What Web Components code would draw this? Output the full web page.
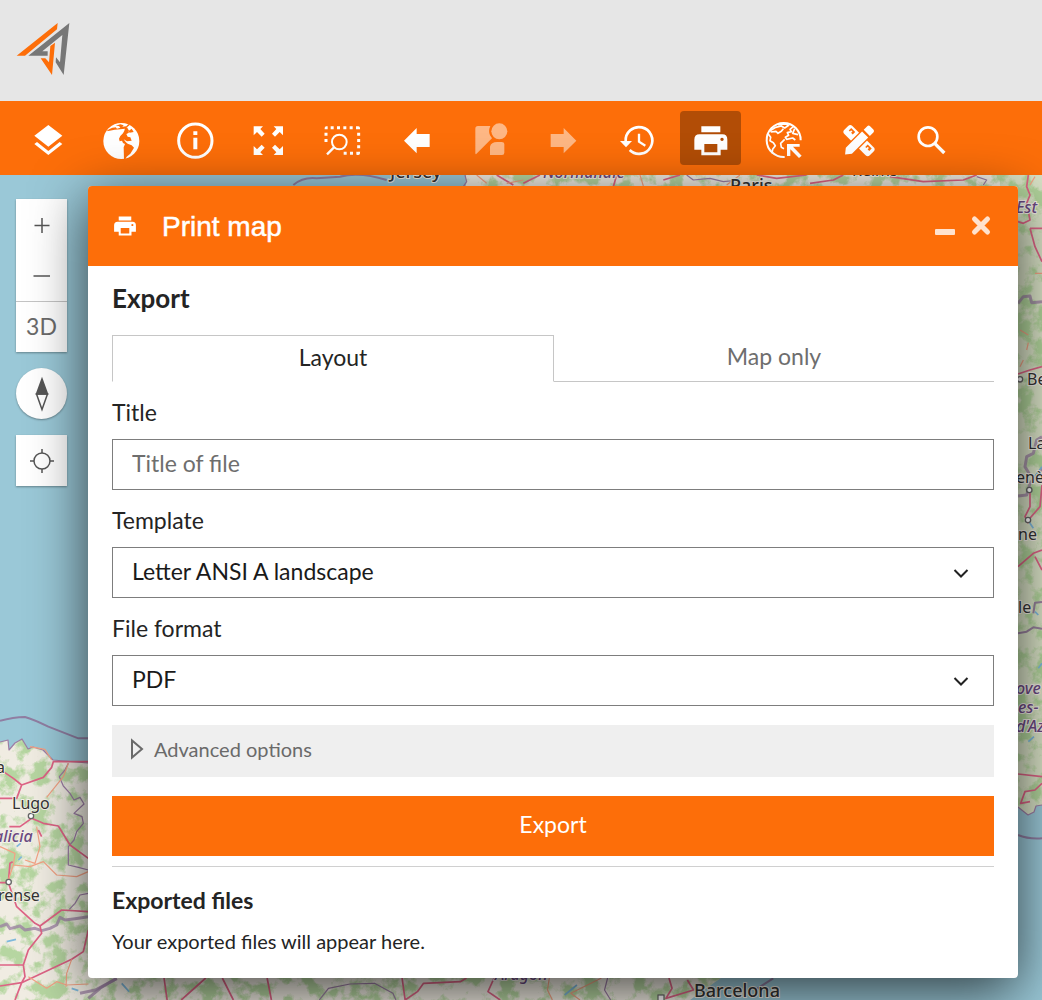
<!DOCTYPE html>
<html lang="en">
<head>
<meta charset="utf-8">
<title>Print map</title>
<style>
  body { margin: 0; font-family: Lato, "Open Sans", sans-serif; color: #242424; background: #9ac8d7; }
  map-app { --brand: #fd6e09; }
</style>
</head>
<body>
<map-app></map-app>

<script>
class BaseElement extends HTMLElement {
  connectedCallback() {
    if (this.shadowRoot) return;
    this.attachShadow({ mode: "open" });
    const t = document.createElement("template");
    t.innerHTML = `<style>*{box-sizing:border-box}button,input,select{font:inherit;color:inherit;margin:0}${this.css()}</style>${this.html()}`;
    this.shadowRoot.append(t.content.cloneNode(true));
  }
  css() { return ""; }
  html() { return "<slot></slot>"; }
}

/* Each icon: [viewBox, markup] */
const printer = `<path fill-rule="evenodd" d="M123 79h57v18h-57zM118 103H186Q201 103 201 119V149H181V166H123V149H102V119Q102 103 118 103zM132 132V157H171V132zM185 113a5 5 0 1 0 .1 0z"/>`;
const ICONS = {
  layers: ["80 51 126 126", `<path d="M144 75l42 32-42 33-42-33zM102 132l8-6 34 27 34-27 8 6-42 33z"/>`],
  globe: ["301 51 126 126", `<circle cx="365" cy="123" r="54"/><g fill="var(--brand)"><path d="M328 88L345 80L338 84L348 82L352 86L362 83L358 78L348 77L362 73L372 76L368 80L380 79L386 72L390 75L382 82L376 86L362 88L345 89L330 92L320 94z"/><path d="M376 84L374 92L370 100L362 108L358 116L360 124L367 122L370 129L376 132L372 142L373 178H377L381 170L392 161L403 143L396 136L384 131L378 126L372 118L382 124L396 122L392 112L384 110L380 102L388 98L384 92L390 98L402 96L396 86L388 92L382 82z"/></g>`],
  info: ["521 51 126 126", `<circle cx="585" cy="122" r="50" fill="none" stroke="#fff" stroke-width="9"/><path d="M579 94h12v11h-12zM579 113h12v35h-12z"/>`],
  expand: ["742 51 126 126", `<path d="M762 79h28l-8 8 13 14-9 9-14-14-10 10zM850 79h-28l8 8-13 14 9 9 14-14 10 10zM762 165h28l-8-8 13-14-9-9-14 14-10-10zM850 165h-28l8-8-13-14 9-9 14 14 10-10z"/>`],
  zoomarea: ["34 51 126 126", `<g fill="none" stroke="#fff"><path stroke-width="9" stroke-dasharray="9 10" d="M63 83H142M147 98V156M49 98V130M102 160H142"/><circle cx="89" cy="126" r="22" stroke-width="6"/><path stroke-width="7" d="M73 142L52 163"/></g><path d="M45 88v-4q0-5 5-5h4v9zM142 79h4q5 0 5 5v4h-9zM142 165h4q5 0 5-5v-4h-9z"/>`],
  back: ["253 51 126 126", `<path d="M280 122L318 84V102H357V141H318V160z"/>`],
  street: ["474 51 126 126", `<circle cx="568" cy="94" r="24"/><path d="M504 78H541Q534 94 540 106L546 115L498 163Q496 163 496 159V86Q496 78 504 78zM540 165V140Q543 126 562 126H575Q583 126 583 132V158Q583 165 576 165z"/>`],
  forward: ["695 51 126 126", `<path d="M798 122L760 84V102H721V141H760V160z"/>`],
  history: ["916 51 126 126", `<g fill="none" stroke="#fff"><path stroke-width="8" d="M945 124A40 40 0 1 1 957 150"/><path stroke-width="7" d="M985 101V125L1004 137"/></g><path d="M928 123H964L946 142z"/>`],
  print: ["86 51 126 126", printer],
  minprint: ["97 70 109 105", printer],
  globecursor: ["307 51 126 126", `<g fill="none" stroke="#fff" stroke-width="6"><path d="M420 121A51 51 0 1 0 372 171"/><path stroke-width="5" stroke-linejoin="round" d="M321 100L330 112L328 122L338 128L344 137L336 148L334 160M327 93L345 82L362 78L372 84L384 76L374 72L352 74M330 96L346 94L352 100L362 94L368 86M398 80L388 88L392 95L380 98L384 106L374 112L378 118L396 114L404 120M372 118L360 130L362 142L370 146M402 86L396 100L412 104"/></g><path d="M379 132H417V140H397L423 167L415 174L389 148V168H379z"/>`],
  design: ["527 51 126 126", `<g transform="rotate(45 593 122)"><rect x="539" y="105" width="108" height="34" rx="9"/><path fill="none" stroke="var(--brand)" stroke-width="5" d="M552 122V114H564V122M562 114V122M622 122V114H634V122M632 114V122"/></g><g transform="rotate(-45 593 122)"><path fill="var(--brand)" d="M564 105H622V139H564z"/><path d="M534 122L550 109H619V135H550zM626 109H641Q647 109 647 115V129Q647 135 641 135H626z"/></g>`],
  search: ["748 51 126 126", `<g fill="none" stroke="#fff"><circle cx="802" cy="110" r="28" stroke-width="8"/><path stroke-width="10" d="M822 130L851 159"/></g>`]
};
class MapIcon extends BaseElement {
  css() { return `:host{display:block;width:42px;height:42px}svg{display:block;width:100%;height:100%}`; }
  html() {
    const [vb, body] = ICONS[this.getAttribute("name")];
    return `<svg viewBox="${vb}" fill="#fff" aria-hidden="true">${body}</svg>`;
  }
}

class BrandHeader extends BaseElement {
  css() { return `:host{display:block;background:#e6e6e6;height:101px}a{display:inline-block}svg{display:block;width:100px;height:100px}`; }
  html() {
    return `<a href="#" aria-label="Home"><svg viewBox="0 0 300 300"><path fill="#fd6e09" d="M50 167L173 69L171 88L75 167zM122 175H136L147 187L151 138L165 128L156 225z"/><path fill="#777" d="M85 167L208 69L191 225L167 187L168 172L180 187L187 105L127 154H143V167z"/></svg></a>`;
  }
}

class ToolButton extends BaseElement {
  css() {
    return `:host{display:block}
    button{display:flex;align-items:center;justify-content:center;width:61px;height:54px;padding:0;border:0;border-radius:4px;background:none}
    :host([active]) button{background:#b24d06}
    button:disabled map-icon{opacity:.5}`;
  }
  html() {
    return `<button aria-label="${this.getAttribute("label")}" ${this.hasAttribute("disabled") ? "disabled" : ""}><map-icon name="${this.getAttribute("icon")}"></map-icon></button>`;
  }
}

class MapToolbar extends BaseElement {
  css() { return `:host{display:block;background:var(--brand);padding:10px 17px}nav{display:flex;justify-content:space-between;max-width:945px}`; }
  html() {
    const tools = [["layers","Layers"],["globe","Base maps"],["info","Information"],["expand","Full extent"],["zoomarea","Zoom to area"],["back","Previous view"],["street","Street view","disabled"],["forward","Next view","disabled"],["history","History"],["print","Print map","active"],["globecursor","Coordinates"],["design","Draw and measure"],["search","Search"]];
    return `<nav aria-label="Map tools">${tools.map(([i,l,s=""]) => `<tool-button icon="${i}" label="${l}" ${s}></tool-button>`).join("")}</nav>`;
  }
}

class BaseMap extends BaseElement {
  css() {
    return `:host{display:block}svg{display:block;width:100%;height:100%}
    path{fill:none;vector-effect:non-scaling-stroke;stroke-linejoin:round}
    .land{fill:#f0ece2}.sea{fill:#9ac8d7}.hills{fill:#c9dcb4;opacity:.6}
    .coast{stroke:#9c7da5;stroke-width:1.2}.border{stroke:#8f7299;stroke-width:2;opacity:.85}.thick{stroke:#9b7fa3;stroke-width:3;opacity:.75}
    .road{stroke:#dd6385;stroke-width:1.7}.minor{stroke:#f3a285;stroke-width:1.2}.river{stroke:#7fb9dc;stroke-width:1.7}
    .town{fill:#fff;stroke:#666;stroke-width:1.2}
    circle.town{stroke-width:4}
    text{font-family:"Noto Sans",sans-serif;font-size:16px;fill:#333;stroke:#f4f0e8;stroke-width:2px;paint-order:stroke}
    .region{font-style:italic;fill:#6b4a82}.city,.region{font-weight:500}.city{font-size:18px}`;
  }
  html() {
    return `<svg viewBox="0 175 1042 825" preserveAspectRatio="xMinYMin slice" role="img" aria-label="Map of western Europe">
    <defs>
      <filter id="veg" x="0" y="0" width="100%" height="100%" color-interpolation-filters="sRGB"><feTurbulence type="fractalNoise" baseFrequency=".06" numOctaves="5" seed="4"/><feColorMatrix values="0 0 0 0 .66  0 0 0 0 .82  0 0 0 0 .57  6 0 0 0 -2.8"/></filter>
      <clipPath id="land"><path d="M0 742L8 740L9 750L15 743L22 739L28 749L33 747L43 750L53 760L88 763H460L466 175H1042V805L1036 806L1034 812L1028 815L1018 807L760 950L690 1000H0z"/></clipPath>
    </defs>
    <path class="sea" d="M0 175H1042V1000H0z"/>
    <g clip-path="url(#land)"><path class="land" d="M0 175H1042V1000H0z"/><path class="hills" d="M1000 175H1042V1000H1000z"/><rect x="0" y="175" width="1042" height="825" filter="url(#veg)" opacity=".8"/></g>
    <path class="coast" d="M0 742L8 740L9 750L15 743L22 739L28 749L33 747L43 750L53 760L88 763M1018 807L1028 815L1034 812L1036 806L1042 805"/>
    <g transform="translate(0 680) scale(.33333)">
      <path class="border" d="M0 122Q40 112 75 111Q100 118 145 140L235 175H265"/>
      <path class="coast" d="M205 250L195 270L178 290L190 318L210 340L222 360L240 352L252 372L222 400L246 410L250 430L230 455L222 480L205 500V555L235 562L265 570M265 640L240 645L225 670L208 688"/>
      <path class="thick" d="M0 740L20 732L30 746L60 738L75 750L105 745L125 752L150 745L170 735L180 712L195 720L225 716L265 710M265 955L300 925L350 895"/>
      <path class="road" d="M265 245H160L155 262L130 292L65 315L40 295L0 268M65 315L50 355H0M28 440H60L95 415L130 430L175 438L210 495L265 535M115 450L125 470M0 608H25L50 680L105 730L120 738L185 690L265 695M25 608L30 550L38 545M120 738L125 760L85 810L70 855H0M70 855L75 890L65 908L0 918M65 908L45 960M65 908L215 838L250 815L265 750"/>
      <path class="minor" d="M90 200L135 208L155 240M205 250L190 290L140 352M110 440L120 500L105 550L75 540M0 500L45 520L40 555L90 560L130 545L170 585L230 590L265 575M40 555L25 600M215 838L200 880L198 920M85 890L140 925L170 905L200 915L265 912"/>
      <path class="river" d="M50 500L62 490M55 540L65 530M20 785L48 778M215 925L235 932"/>
      <circle class="town" cx="93" cy="408" r="8"/><circle class="town" cx="26" cy="606" r="8"/>
    </g>
    <g transform="translate(310 100) scale(.33333)">
      <path class="border" d="M-50 255Q-20 230 20 235L90 230Q150 215 230 240"/>
      <path class="coast" d="M465 225L470 245L460 260"/>
      <path class="road" d="M560 225L610 255M640 250L690 225M920 225L910 260M1060 240L1110 225"/>
      <path class="minor" d="M500 225L530 250M590 250L640 240M990 225L1000 258M1250 255L1290 225"/>
      <path class="coast" d="M1130 225L1150 240L1200 235L1240 245L1290 240M2000 230L2030 240L2020 255"/>
      <path class="road" d="M1340 225L1400 235L1490 225M1500 250L1570 240L1600 225M1740 230L1840 245L1960 240L2000 225"/>
    </g>
    <g transform="translate(980 170) scale(.33333)">
      <path class="road" d="M145 15L140 50L150 75L140 100L150 150L130 160L114 155M150 175H186M150 175L165 230L186 275M114 612L150 600L186 590M150 965V1010L135 1040L145 1060M186 945L180 1010L145 1050M114 1190L160 1150L186 1140M165 1160L186 1200"/>
      <path class="minor" d="M165 20L150 45M165 310H186M120 480L145 495M145 518L140 540M130 570L120 590"/>
      <path class="thick" d="M114 400L130 380L150 378L155 398L186 395M186 800L170 810L160 850L140 860L135 890L150 915M114 978L140 975L150 940L186 895"/>
      <path class="river" d="M186 890L165 920M145 1052L160 1075"/>
      <circle class="town" cx="120" cy="628" r="8"/><circle class="town" cx="148" cy="960" r="8"/><circle class="town" cx="144" cy="1050" r="8"/>
    </g>
    <g transform="translate(980 580) scale(.33333)">
      <path class="border" d="M114 160L140 155L160 142L186 146M160 100L165 68L186 66"/>
      <path class="border" d="M114 765Q145 778 186 775"/>
      <path class="road" d="M114 582L186 590M186 610L165 630L135 635L122 670L150 665"/>
      <path class="river" d="M165 95L175 105M145 485L162 470M175 265L186 250"/>
    </g>
    <g transform="translate(80 930) scale(.6135 .33333)">
      <path class="thick" d="M0 190L25 180L60 146"/>
      <path class="road" d="M137 144L142 210M205 144L165 210M232 144L250 210M305 144L312 210M525 144L530 210L550 185L560 160L620 155L630 144M675 144L665 185L685 210M960 144L965 175L955 205L1000 180L990 150"/>
      <path class="minor" d="M765 144L762 180L770 210M850 144L800 190L815 210"/>
      <path class="coast" d="M390 210L405 175L440 162L480 160L510 190L515 210M860 144L855 180L865 210"/>
      <path class="river" d="M68 160L80 185M810 165L790 195"/>
      <path class="border" d="M1100 180L1130 145"/>
    </g>
    <text class="city" x="390" y="178">Jersey</text><text class="region" x="543" y="178">Normandie</text>
    <text x="730" y="192" class="city">Paris</text><text x="852" y="176">Reims</text>
    <text class="region" x="1016" y="213">Est</text><text x="1027" y="385">Be</text><text x="1028" y="449">La</text>
    <text x="1016" y="483">enè</text><text x="1018" y="540">ne</text><text x="1018" y="613">le</text>
    <text class="region" x="1016" y="694">ove</text><text class="region" x="1018" y="713">es-</text><text class="region" x="1016" y="732">d'Az</text>
    <text x="-4" y="773">a</text><text x="12" y="809">Lugo</text><text class="region" x="-6" y="842">alicia</text><text x="-2" y="901">rense</text>
    <text class="region" x="495" y="980">Aragón</text><text class="city" x="694" y="997">Barcelona</text><rect x="658" y="995" width="6" height="6" class="town"/>
    </svg>`;
  }
}

class MapControls extends BaseElement {
  css() {
    return `:host{display:flex;flex-direction:column;gap:16px;width:51px;color:#6a6a6a}
    .card{background:#fff;box-shadow:0 1px 2px rgba(0,0,0,.35)}
    button{display:flex;align-items:center;justify-content:center;width:51px;height:51px;padding:0;border:0;background:none;font-size:23px}
    .three{border-top:1px solid #c4c4c4;padding-bottom:2px}.round{border-radius:50%}
    svg{display:block;width:32px;height:38px;fill:none;stroke:#555;stroke-width:1.5}`;
  }
  html() {
    return `<div class="card"><button aria-label="Zoom in"><svg viewBox="0 0 32 38"><path d="M16 12v15M8.5 19.500h15"/></svg></button><button aria-label="Zoom out"><svg viewBox="0 0 32 38"><path d="M7.500 19h16.500"/></svg></button><button class="three">3D</button></div>
    <div class="card round"><button aria-label="Compass"><svg viewBox="0 0 32 38"><path d="M10.500 19L16 34.500L21.500 19z"/><path fill="#555" d="M10.500 19L16 4L21.500 19z"/></svg></button></div>
    <div class="card"><button aria-label="Find my location"><svg viewBox="0 0 32 38"><circle cx="16" cy="19" r="8"/><path d="M16 7v4M16 27v4M4 19h4M24 19h4"/></svg></button></div>`;
  }
}

class TextField extends BaseElement {
  css() {
    return `:host{display:flex;flex-direction:column;gap:12px;margin-top:15px;font-size:23px}
    label{line-height:30px}
    input{width:100%;height:51px;padding:0 19px 4px;border:1px solid #7d7d7d;border-radius:0;background:#fff;outline:0}
    input::placeholder{color:#6e6e6e;opacity:1}`;
  }
  html() { return `<label for="f">${this.getAttribute("label")}</label><input id="f" type="text" placeholder="${this.getAttribute("placeholder")}">`; }
}

class SelectField extends BaseElement {
  css() {
    return `:host{display:flex;flex-direction:column;gap:12px;margin-top:15px;font-size:23px}
    label{line-height:30px}
    .box{display:grid;align-items:center;border:1px solid #7d7d7d}
    select,svg{grid-area:1/1}
    select{appearance:none;width:100%;height:49px;padding:0 19px 4px;border:0;border-radius:0;background:#fff;color:#1a1a1a;outline:0}
    svg{justify-self:end;width:18px;height:12px;margin-right:23px;fill:none;stroke:#222;stroke-width:2;pointer-events:none}`;
  }
  html() {
    return `<label for="f">${this.getAttribute("label")}</label><div class="box"><select id="f"><option>${this.getAttribute("value")}</option></select><svg viewBox="0 0 18 12"><path d="M2.500 3L9 9.500L15.500 3"/></svg></div>`;
  }
}

class MapWindow extends BaseElement {
  css() {
    return `:host{display:block;background:#fff;border-radius:4px;box-shadow:0 14px 56px rgba(0,0,0,.7)}
    header{display:flex;align-items:center;height:80px;padding:0 19px 0 25px;background:var(--brand);border-radius:4px 4px 0 0;color:#fff}
    header map-icon{width:24px;height:24px}
    h1{flex:1;margin:0 0 0 25px;padding-top:2px;font:400 28px/40px "Liberation Sans",sans-serif;-webkit-text-stroke:.5px #fff}
    button{width:36px;height:36px;padding:0;border:0;background:none}
    svg{display:block;width:36px;height:36px;fill:none;stroke:#ffe2ce;stroke-width:5;stroke-linecap:round}
    .body{padding:16px 24px 22px}`;
  }
  html() {
    return `<header><map-icon name="minprint"></map-icon><h1>${this.getAttribute("heading")}</h1>
    <button aria-label="Minimize"><svg viewBox="0 0 36 36"><rect x="8" y="21" width="20" height="6" rx="1" fill="#ffe2ce" stroke="none"/></svg></button>
    <button aria-label="Close"><svg viewBox="0 0 36 36"><path d="M11.500 11L24.500 24M24.500 11L11.500 24"/></svg></button></header>
    <div class="body"><slot></slot></div>`;
  }
}

class ExportForm extends BaseElement {
  css() {
    return `:host{display:block}
    h2,h3,p{margin:0}
    h2{font-size:26px;line-height:32px;font-weight:700}
    .tabs{display:flex;height:47px;margin-top:21px}
    .tabs button{flex:1;padding:0 0 4px;border:0;border-bottom:1px solid #c6c6c6;background:none;color:#6e6e6e;font-size:23px}
    .tabs button[aria-selected=true]{border:1px solid #c6c6c6;border-bottom-color:#fff;color:#242424}
    .more{display:flex;align-items:center;gap:10px;width:100%;height:52px;margin-top:19px;padding:0 0 4px 18px;border:0;background:#efefef;color:#6a6a6a;font-size:20px}
    .more svg{width:14px;height:22px;fill:none;stroke:#6a6a6a;stroke-width:2}
    .go{display:block;width:100%;height:60px;margin-top:19px;padding:0 0 4px;border:0;background:var(--brand);color:#fff;font-size:23px}
    section{margin-top:10px;padding-top:17px;border-top:1px solid #d0d0d0}
    h3{font-size:23px;line-height:32px;font-weight:700}
    p{margin-top:10px;font-size:20px;line-height:30px}`;
  }
  html() {
    return `<h2>Export</h2>
    <div class="tabs" role="tablist"><button role="tab" aria-selected="true">Layout</button><button role="tab" aria-selected="false">Map only</button></div>
    <text-field label="Title" placeholder="Title of file"></text-field>
    <select-field label="Template" value="Letter ANSI A landscape"></select-field>
    <select-field label="File format" value="PDF"></select-field>
    <button class="more" aria-expanded="false"><svg viewBox="0 0 14 22"><path d="M2 2.500V19.500L12 11z"/></svg>Advanced options</button>
    <button class="go">Export</button>
    <section><h3>Exported files</h3><p>Your exported files will appear here.</p></section>`;
  }
}

class MapApp extends BaseElement {
  css() {
    return `:host{display:flex;flex-direction:column;min-height:100vh}
    main{display:grid;flex:1;grid-template-columns:minmax(0,1fr)}
    base-map,.overlay{grid-area:1/1;min-height:0}
    base-map{contain:size}
    .overlay{position:relative;display:flex;align-items:flex-start;gap:21px;padding:11px 24px 22px 16px}
    map-controls{margin-top:13px}
    map-window{flex:1;min-width:0}`;
  }
  html() {
    return `<brand-header></brand-header><map-toolbar></map-toolbar>
    <main><base-map></base-map><div class="overlay"><map-controls></map-controls><map-window heading="Print map"><export-form></export-form></map-window></div></main>`;
  }
}

customElements.define("map-icon", MapIcon);
customElements.define("brand-header", BrandHeader);
customElements.define("tool-button", ToolButton);
customElements.define("map-toolbar", MapToolbar);
customElements.define("base-map", BaseMap);
customElements.define("map-controls", MapControls);
customElements.define("text-field", TextField);
customElements.define("select-field", SelectField);
customElements.define("map-window", MapWindow);
customElements.define("export-form", ExportForm);
customElements.define("map-app", MapApp);
</script>
</body>
</html>
